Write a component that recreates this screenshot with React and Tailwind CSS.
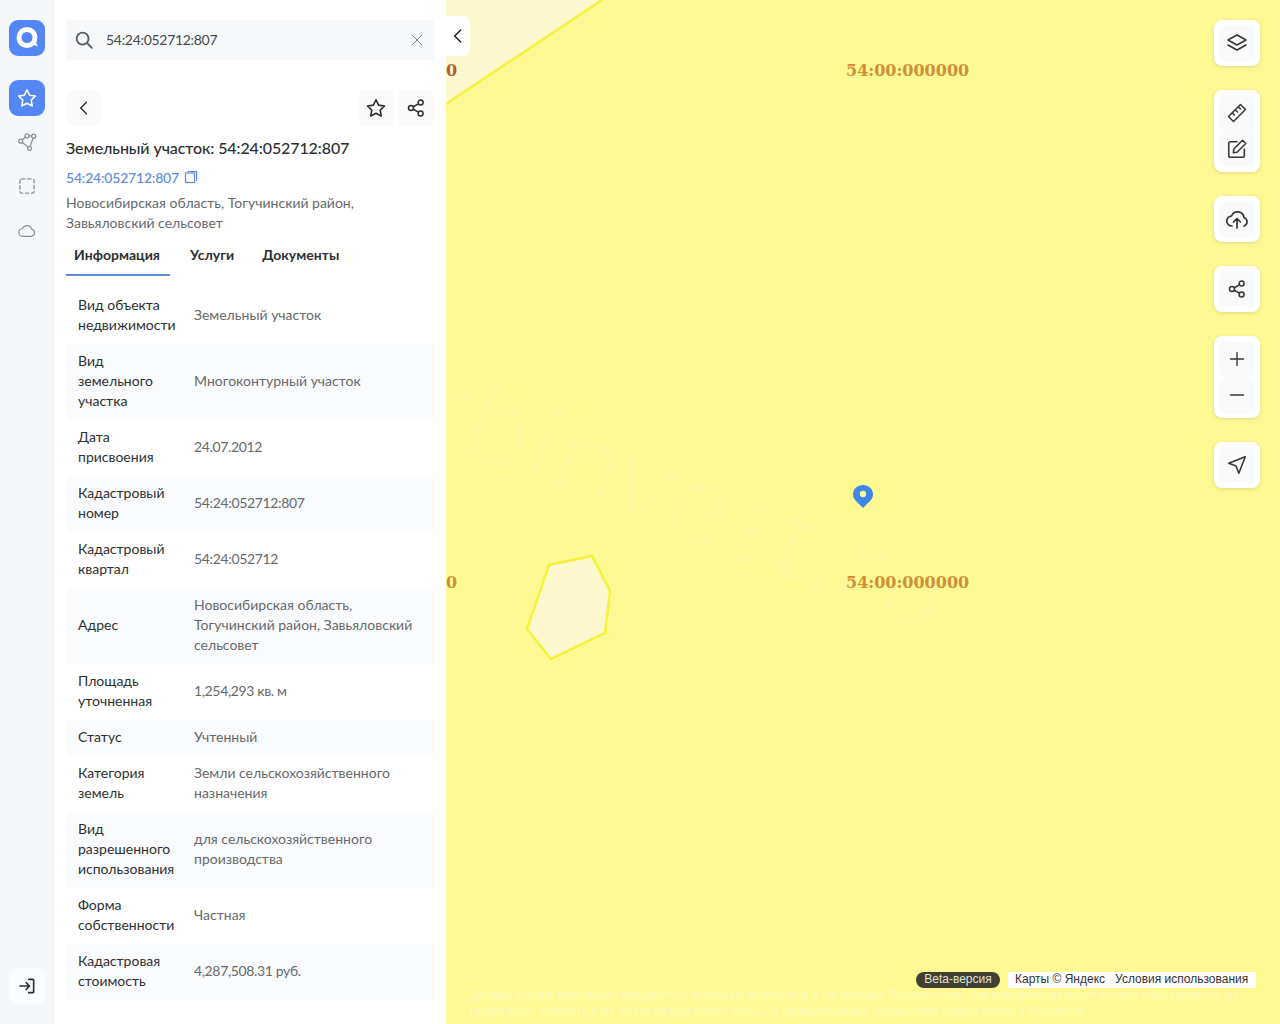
import React from "react";

const S = ({ children, size = 20, sw = 1.8, className = "" }) => (
  <svg width={size} height={size} viewBox="0 0 24 24" fill="none" stroke="currentColor" strokeWidth={sw} strokeLinecap="round" strokeLinejoin="round" className={className}>{children}</svg>
);
const Star = (p) => <S {...p}><path d="M12 3l2.800 5.900 6.400.9-4.600 4.500 1.100 6.400L12 17.700l-5.700 3 1.100-6.400-4.600-4.500 6.400-.9z" /></S>;
const Share = (p) => <S {...p}><circle cx="17.500" cy="5.500" r="3" /><circle cx="6" cy="12" r="3" /><circle cx="17.500" cy="18.500" r="3" /><path d="M8.700 10.500l6.200-3.500M8.700 13.500l6.200 3.500" /></S>;

const rows = [
  ["Вид объекта недвижимости", "Земельный участок"],
  ["Вид земельного участка", "Многоконтурный участок"],
  ["Дата присвоения", "24.07.2012"],
  ["Кадастровый номер", "54:24:052712:807"],
  ["Кадастровый квартал", "54:24:052712"],
  ["Адрес", "Новосибирская область, Тогучинский район, Завьяловский сельсовет"],
  ["Площадь уточненная", "1,254,293 кв. м"],
  ["Статус", "Учтенный"],
  ["Категория земель", "Земли сельскохозяйственного назначения"],
  ["Вид разрешенного использования", "для сельскохозяйственного производства"],
  ["Форма собственности", "Частная"],
  ["Кадастровая стоимость", "4,287,508.31 руб."],
];

const Card = ({ children }) => (
  <div className="flex flex-col items-center w-[46px] py-[5px] bg-white rounded-[8px] shadow-[0_1px_4px_rgba(0,0,0,0.12)]">{children}</div>
);
const Btn = ({ children }) => (
  <button className="w-9 h-9 flex items-center justify-center rounded-[6px] bg-[#fafafa] text-[#33363a]">{children}</button>
);

export default function App() {
  return (
    <div className="w-[1280px] h-[1024px] flex overflow-hidden bg-white text-[#2d3033] font-['Lato','Open_Sans',sans-serif]">
      <aside className="w-[54px] shrink-0 h-full bg-[#f4f8fa] border-r border-[#e8f0f4] flex flex-col items-center pt-5 pl-[1px] pb-5">
        <div className="w-9 h-9 rounded-[9px] bg-[#5487f5] flex items-center justify-center">
          <svg width="28" height="28" viewBox="0 0 28 28"><circle cx="14" cy="13.500" r="8" fill="none" stroke="#fff" strokeWidth="5" /><path d="M18 20l7 2.500-4-8z" fill="#fff" /></svg>
        </div>
        <div className="mt-6 w-9 h-9 rounded-[9px] bg-[#5487f5] flex items-center justify-center text-white"><Star size={22} sw={1.700} /></div>
        <div className="mt-2 w-9 h-9 flex items-center justify-center text-[#8b9197]">
          <S size={20} sw={1.500}><circle cx="4.500" cy="11" r="2.400" /><circle cx="12" cy="4.500" r="2.400" /><circle cx="20" cy="5" r="2.400" /><circle cx="15" cy="19.500" r="2.400" /><path d="M6.300 9.400l3.900-3.400M14.400 4.600h3.200M19.300 7.300l-3.600 10M13.200 18L6.300 12.600" /></S>
        </div>
        <div className="mt-2 w-9 h-9 flex items-center justify-center text-[#8b9197]">
          <S size={20} sw={1.600}><rect x="3.500" y="3.500" width="17" height="17" rx="2" strokeDasharray="4 3.200" /></S>
        </div>
        <div className="mt-2 w-9 h-9 flex items-center justify-center text-[#8b9197]">
          <S size={20} sw={1.500}><path d="M7 19.500a4.500 4.500 0 0 1-.6-9 6 6 0 0 1 11.400.6 4.300 4.300 0 0 1-.3 8.400z" /></S>
        </div>
        <button className="mt-auto w-9 h-9 rounded-[8px] bg-[#fbfcfd] flex items-center justify-center text-[#2d3033]">
          <S size={20} sw={2}><path d="M14 4h5a1 1 0 0 1 1 1v14a1 1 0 0 1-1 1h-5M3.500 12H15M11 8l4 4-4 4" /></S>
        </button>
      </aside>

      <section className="w-[392px] shrink-0 h-full bg-white px-3 pt-5">
        <div className="h-10 bg-[#f6f8fa] rounded-[4px] flex items-center pl-[7px] pr-[9px] text-[14px] text-[#44484c]">
          <S size={22} sw={2} className="text-[#55595d]"><circle cx="10.500" cy="10.500" r="6.500" /><path d="M15.500 15.500l5 5" /></S>
          <span className="ml-[11px] flex-1 pb-[2px] tracking-[-0.3px]">54:24:052712:807</span>
          <S size={16} sw={1.400} className="text-[#71767a]"><path d="M5 5l14 14M19 5L5 19" /></S>
        </div>

        <div className="mt-[30px] flex items-center justify-between">
          <button className="w-9 h-9 rounded-[8px] bg-[#fafafa] flex items-center justify-center"><S size={20} sw={1.700}><path d="M15 5l-7 7 7 7" /></S></button>
          <div className="flex gap-1">
            <button className="w-9 h-9 rounded-[8px] bg-[#fafafa] flex items-center justify-center"><Star size={22} /></button>
            <button className="w-9 h-9 rounded-[8px] bg-[#fafafa] flex items-center justify-center"><Share size={20} /></button>
          </div>
        </div>

        <h1 className="mt-[10px] text-[16px] leading-[24px] font-medium tracking-[-0.1px] text-[#2d3033]">Земельный участок: 54:24:052712:807</h1>
        <div className="mt-[7px] h-5 flex items-center text-[14px] font-medium tracking-[-0.2px] text-[#5b8bdc]">
          54:24:052712:807
          <svg width="14" height="14" viewBox="0 0 14 14" fill="none" stroke="currentColor" strokeWidth="1.200" className="ml-[5px]"><rect x="1.500" y="3" width="9" height="9.500" /><path d="M3.500 1.500h9v9.500" /></svg>
        </div>
        <p className="mt-[6px] text-[14px] leading-5 text-[#66696d]">Новосибирская область, Тогучинский район,<br />Завьяловский сельсовет</p>

        <div className="mt-[6px] flex h-[37px] text-[14px] font-bold text-[#2d3033]">
          <div className="w-[104px] border-b-2 border-[#5b8bdc] pl-2 pt-[5px]">Информация</div>
          <div className="ml-5 pt-[5px]">Услуги</div>
          <div className="ml-7 pt-[5px]">Документы</div>
        </div>

        <div className="mt-3 text-[14px] leading-5">
          {rows.map(([k, v], i) => (
            <div key={k} className={"flex items-center pt-[7px] pb-[9px] " + (i % 2 ? "bg-[#fafbfc]" : "bg-white")}>
              <div className="w-[128px] pl-3 pr-[14px] shrink-0 text-[#2d3033]">{k}</div>
              <div className={"flex-1 pr-4 text-[#66696d] " + (/^[0-9]/.test(v) ? "tracking-[-0.35px]" : "")}>{v}</div>
            </div>
          ))}
        </div>
      </section>

      <main className="relative flex-1 h-full bg-[#fdf993] overflow-hidden">
        <svg width="834" height="1024" viewBox="446 0 834 1024" className="absolute inset-0">
          <polygon points="446,0 602,0 446,104" fill="#fef8cf" />
          <path d="M602 0L446 104" stroke="#f8f33a" strokeWidth="2.500" fill="none" />
          <polygon points="549,565 592,556 610,591 605,633 551,659 527,629" fill="#fef8cf" stroke="#f8f33a" strokeWidth="2.500" />
        </svg>
        <span className="absolute left-[-36px] top-[440px] text-[110px] leading-none whitespace-nowrap rotate-[21deg] text-white/[0.08] font-['Open_Sans',sans-serif]">rbinvest.ru</span>
        <span className="absolute left-0 top-[61px] font-['DejaVu_Serif',serif] font-bold text-[16px] leading-5 text-[#b5602a]">0</span>
        <span className="absolute left-0 top-[573px] font-['DejaVu_Serif',serif] font-bold text-[16px] leading-5 text-[#cf8f38]">0</span>
        <span className="absolute left-[400px] top-[61px] font-['DejaVu_Serif',serif] font-bold text-[16px] leading-5 text-[#cf8f38]">54:00:000000</span>
        <span className="absolute left-[400px] top-[573px] font-['DejaVu_Serif',serif] font-bold text-[16px] leading-5 text-[#cf8f38]">54:00:000000</span>

        <button className="absolute left-0 top-4 w-6 h-10 bg-white rounded-r-[8px] flex items-center justify-center text-[#1d1f21]"><S size={20} sw={1.800}><path d="M15 5l-7 7 7 7" /></S></button>

        <svg width="22" height="26" viewBox="0 0 22 26" className="absolute left-[406px] top-[483px]"><path d="M11 2C5.500 2 1 6 1 11.500c0 3.500 2 5.500 4 7.500l6 6 6-6c2-2 4-4 4-7.500C21 6 16.500 2 11 2z" fill="#3f85ea" /><circle cx="11" cy="11" r="3.200" fill="#fdf993" /></svg>

        <div className="absolute right-5 top-5 flex flex-col gap-6">
          <Card><Btn><S size={24} sw={1.500}><path d="M12 4l9 5-9 5-9-5z" /><path d="M3 14l9 5 9-5" /></S></Btn></Card>
          <Card>
            <Btn><S size={24} sw={1.500}><path d="M3.500 15.500L15.500 3.500l5 5-12 12z" /><path d="M7.500 12l2 2M10.500 9l2 2M13.500 6l2 2" /></S></Btn>
            <Btn><S size={22} sw={1.700}><path d="M12 4H5a2 2 0 0 0-2 2v13a2 2 0 0 0 2 2h13a2 2 0 0 0 2-2v-7" /><path d="M18 2.500l3.500 3.500-9.500 9.500-4 .5.500-4z" /></S></Btn>
          </Card>
          <Card><Btn><S size={24} sw={1.700}><path d="M7 19a5 5 0 0 1-.5-10 6.500 6.500 0 0 1 12.500 1.500 4.500 4.500 0 0 1 0 8.500" /><path d="M12 21v-9M8.500 15l3.500-3.500 3.500 3.500" /></S></Btn></Card>
          <Card><Btn><Share size={20} /></Btn></Card>
          <Card>
            <Btn><S size={22} sw={1.500}><path d="M12 5v14M5 12h14" /></S></Btn>
            <Btn><S size={22} sw={1.500}><path d="M5 12h14" /></S></Btn>
          </Card>
          <Card><Btn><S size={22} sw={1.700}><path d="M21 3L3 10l8 3 3 8z" /></S></Btn></Card>
        </div>

        <div className="absolute left-[470px] top-[972px] h-[16px] w-[84px] rounded-full bg-[#3f3f33] text-[12px] leading-[15px] text-center text-[#e0e0d0] font-['Liberation_Sans',sans-serif]">Beta-версия</div>
        <div className="absolute left-[562px] top-[972px] h-[16px] w-[248px] rounded-[2px] bg-white pl-[7px] text-[12px] leading-[15px] text-[#333] font-['Liberation_Sans',sans-serif] whitespace-nowrap">Карты © Яндекс&nbsp;&nbsp; Условия использования</div>
        <p className="absolute left-6 top-[987px] w-[790px] text-[11.900px] leading-4 text-white/40 font-['Liberation_Sans',sans-serif]">Данный ресурс использует сведения из открытых источников и не связан с Росреестром. Вся информация носит справочный характер, не гарантирует точность и не имеет юридической силы. За официальными сведениями обращайтесь в Росреестр</p>
      </main>
    </div>
  );
}
